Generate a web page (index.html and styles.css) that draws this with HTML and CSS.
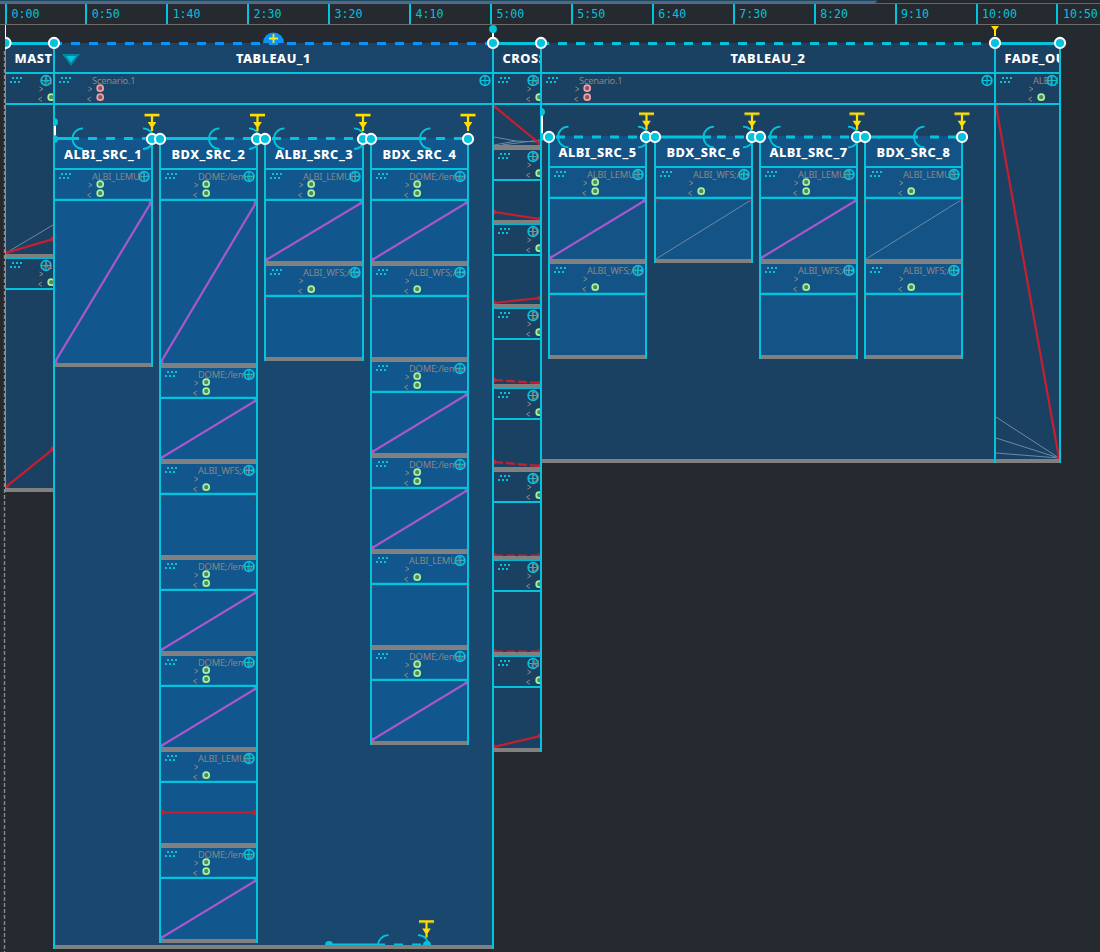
FILE: index.html
```html
<!DOCTYPE html>
<html lang="en">
<head>
<meta charset="utf-8">
<title>Timeline</title>
<link rel="stylesheet" href="styles.css">
</head>
<body>
<div class="app">
  <div class="minimap"><div class="minimap-range"></div></div>
  <div class="ruler" id="ruler"></div>
  <main class="score" id="score"></main>
  <svg class="overlay" id="overlay" width="1100" height="952" viewBox="0 0 1100 952"></svg>
</div>
<script src="app.js"></script>
</body>
</html>
```
FILE: styles.css
```css
* { box-sizing: border-box; }
body {
  margin: 0;
  width: 1100px;
  height: 952px;
  overflow: hidden;
  background: #252930;
  font-family: "Noto Sans", sans-serif;
}
svg { display: block; }
.app { position: relative; height: 952px; overflow: hidden; }
.minimap { height: 4px; border-bottom: 1px solid #666; }
.minimap-range { width: 877px; height: 3px; background: #54668f; border-top: 1px solid #1b4a5a; border-bottom-right-radius: 3px; }
.ruler { display: flex; height: 21px; padding-left: 5px; border-bottom: 1px solid #6c6c6c; overflow: hidden; }
.tick {
  flex: none;
  width: 80.95px;
  height: 20px;
  padding-left: 4.5px;
  border-left: 2px solid #03c3dd;
  color: #03c3dd;
  font: 11.6px/21px "DejaVu Sans Mono", monospace;
}
.tick:first-child { width: 80.2px; }
.score { display: flex; align-items: flex-start; padding: 18px 0 0 5px; }
.interval { flex: none; border: 0 solid #03c3dd; background: #1b4162; overflow: hidden; }
.edge-thin { border-left-width: 1px; }
.edge-left { border-left-width: 2px; }
.edge-right { border-right-width: 2px; }
.title {
  height: 31px;
  border-bottom: 2px solid #03c3dd;
  background: #1b4162;
  color: #fff;
  font-size: 12.8px;
  font-weight: 800;
  letter-spacing: 0.5px;
  line-height: 30px;
  text-align: center;
  white-space: nowrap;
  overflow: hidden;
}
.title.cut { padding-left: 8.5px; text-align: left; }
.tableau { background: #1a476d; }
.tableau .title, .tableau > .slot > .slot-head { background: #1a456a; }
.slot-head { display: grid; grid-template-columns: minmax(0, 1fr); height: 31px; border-bottom: 2px solid #03c3dd; overflow: hidden; }
.slot-head > * { grid-area: 1 / 1; }
.slot-name {
  margin: 0 1px 0 37px;
  color: #8a8782;
  font-size: 9.3px;
  letter-spacing: -0.2px;
  line-height: 13px;
  white-space: nowrap;
  overflow: hidden;
}
.slot-add { justify-self: end; }
.slot + .slot .slot-head { height: 32px; border-top: 1px solid #03b3d3; }
.slot-foot { height: 4px; background: #808080; }
.lane { display: flex; align-items: flex-start; }
.source { flex: none; border: solid #03c3dd; border-width: 0 2px; background: #11568c; overflow: hidden; }
.second .source { background: #145386; }
.source .title { height: 32px; padding-top: 0; line-height: 33px; background: #11568c; }
.source .slot-head { background: #11568c; box-shadow: inset 0 -1px #0b719f; }
.second .title, .second > .slot > .slot-head { background: #1b4162; }
.second .source .title, .second .source .slot-head { background: #145386; }
.overlay { position: absolute; left: 0; top: 0; }
```
FILE: app.js
```js
const CY = '#03c3dd', RED = '#c51f30', VIO = '#a957cc', GRY = '#6b8aa6';

document.getElementById('ruler').innerHTML =
  ['0:00', '0:50', '1:40', '2:30', '3:20', '4:10', '5:00', '5:50', '6:40', '7:30', '8:20', '9:10', '10:00', '10:50']
    .map(t => `<div class="tick">${t}</div>`).join('');

/* Slot header: grip, in/out ports, process name, add button */
function head(name, ports, colors = ['#a5f3a0', '#56855a']) {
  const port = y => `<circle cx="45.2" cy="${y}" r="3" fill="${colors[1]}" stroke="${colors[0]}" stroke-width="1.7"/>`;
  return `<div class="slot-head">
    <svg width="60" height="29"><path fill="${CY}" d="M6 3h2v2h-2zM10 3h2v2h-2zM14 3h2v2h-2zM4 7h2v2h-2zM8 7h2v2h-2zM12 7h2v2h-2z"/>
    <path fill="none" stroke="#8a8782" d="M33.5 13l3.5 2l-3.5 2M36 23l-3.5 2.2l3.5 2.2"/>
    ${ports === 2 ? port(14.2) : ''}${port(23.2)}</svg>
    <svg class="slot-add" width="13" height="13"><circle cx="6" cy="6.5" r="4.8" fill="none" stroke="${CY}" stroke-width="1.8"/><path d="M6 2v9M1.5 6.5h9" stroke="${CY}" stroke-width="1.2"/></svg>
    <div class="slot-name">${name}</div>
  </div>`;
}

const ln = (x1, y1, x2, y2, c, w, extra = '') =>
  `<line x1="${x1}" y1="${y1}" x2="${x2}" y2="${y2}" stroke="${c}" stroke-width="${w}" ${extra}/>`;
const dot = (x, y, c, r = 2.5) => `<circle cx="${x}" cy="${y}" r="${r}" fill="${c}"/>`;

const curves = {
  violet: (w, h) => ln(0, h - 1, w, 1.5, VIO, 2.2) + dot(0.5, h - 1.5, VIO, 2) + dot(w - 0.5, 1.5, VIO, 2),
  top: w => ln(0, .5, w, .5, RED, 1) + `<path fill="${RED}" d="M0 0h3L0 3zM${w} 0h-3l3 3z"/>`,
  topDiag: (w, h) => ln(0, h, w, 1, GRY, 1) + curves.top(w),
  mid: w => ln(0, 29.5, w, 29.5, RED, 2.2) + dot(0, 29.5, RED, 3) + dot(w, 29.5, RED, 3)
};
const seg = (a, b, dash, extra = '') => w =>
  extra + ln(0, a, w, b, RED, 2.2, dash ? 'stroke-dasharray="9 3"' : '') + dot(0, a, RED) + dot(w, b, RED);

function slot([name, ports, h, draw, colors], w) {
  const f = typeof draw === 'string' ? curves[draw] : draw;
  return `<section class="slot">${head(name, ports, colors)}
    <svg width="${w}" height="${h}">${f(w, h)}</svg><div class="slot-foot"></div></section>`;
}

const L2 = ['ALBI_LEMUR;', 2, 60, 'violet'], D = ['DOME;/lemur', 2, 60, 'violet'];
const W = ['ALBI_WFS;/lfs', 1, 60, 'top'], L1 = ['ALBI_LEMUR;', 1, 60, 'top'];
const vary = (s, h, d) => [s[0], s[1], h, d];

/* [title, gap before, width, slots] */
const first = [
  ['ALBI_SRC_1', -2, 100, [vary(L2, 162, 'violet')]],
  ['BDX_SRC_2', 6, 99, [vary(D, 162, 'violet'), D, W, D, D, vary(L1, 60, 'mid'), D]],
  ['ALBI_SRC_3', 6, 100, [L2, W]],
  ['BDX_SRC_4', 6, 99, [D, W, D, D, L1, D]]
];
const second = [
  ['ALBI_SRC_5', 6, 99, [L2, W]],
  ['BDX_SRC_6', 7, 99, [vary(W, 60, 'topDiag')]],
  ['ALBI_SRC_7', 6, 99, [L2, W]],
  ['BDX_SRC_8', 6, 99, [vary(L1, 60, 'topDiag'), W]]
];

function tableau(list, cls, edge, title, w, h, top) {
  const cols = list.map(([t, gap, cw, slots]) => `<div class="source" style="margin-left:${gap}px;width:${cw}px">
    <div class="title">${t}</div>${slots.map(s => slot(s, cw - 4)).join('')}</div>`).join('');
  return `<section class="interval ${cls} ${edge}" style="width:${w}px"><div class="title">${title}</div>
    <div class="slot">${head('Scenario.1', 2, ['#f2a0a8', '#8d5560'])}
    <div class="lane" style="height:${h}px;padding-top:${top}px">${cols}</div><div class="slot-foot"></div></div></section>`;
}
const plain = (title, edge, w, inner, slots) =>
  `<section class="interval ${edge}" style="width:${w}px"><div class="title cut">${title}</div>
   ${slots.map(s => slot(s, inner)).join('')}</section>`;

const AL = 'ALBI_LEMUR', DM = 'DOME;/lemur';
document.getElementById('score').innerHTML =
  plain('MASTER', 'edge-thin', 48, 47, [
    [AL, 1, 149, seg(148, 134, 0, ln(0, 148, 47, 120, GRY, 1))],
    [AL, 1, 198, seg(197, 159)]]) +
  tableau(first, 'tableau', 'edge-left edge-right', 'TABLEAU_1', 441, 840, 33) +
  plain('CROSSFADE', 'edge-right', 48, 46, [
    [AL, 1, 40, seg(1, 39, 0, `<path d="M0 32L22 36L46 37M0 40L22 36M8 40L46 35" fill="none" stroke="${GRY}"/>`)],
    [DM, 1, 39, seg(31, 38)], [DM, 1, 48, seg(47, 42)], [DM, 1, 44, seg(40, 43, 1)],
    [DM, 1, 47, seg(42, 46, 1)], [DM, 1, 53, seg(52.5, 52.5, 1)],
    [DM, 1, 60, seg(59.5, 59.5, 1)], [AL, 1, 60, seg(59, 48)]]) +
  tableau(second, 'second', '', 'TABLEAU_2', 452, 354, 31) +
  plain('FADE_OUT', 'edge-left edge-right', 67, 63, [
    ['ALBI_L', 1, 354, seg(1, 353, 0, [312, 333, 348].map(y => ln(0, y, 63, 353, GRY, 1)).join(''))]]);

/* Overlay: time bars, flexible bounds, sync nodes and triggers */
const bar = (x1, x2, y, c = CY, h = 3) => ln(x1, y, x2, y, c, h);
const dashes = (x1, x2, y, c = CY) => ln(x1, y, x2, y, c, 3, 'stroke-dasharray="9 9"');
const open = (x, y) => `<path d="M${x + 11} ${y - 10.3}A10.5 10.3 0 0 0 ${x + 11} ${y + 10.3}" fill="none" stroke="${CY}" stroke-width="1.8"/>`;
const close = (x, y) => `<path d="M${x} ${y - 10.3}A10.5 10.3 0 0 1 ${x} ${y + 10.3}" fill="none" stroke="${CY}" stroke-width="1.8"/>`;
const node = (x, y) => `<circle cx="${x}" cy="${y}" r="5.1" fill="${CY}" stroke="#fff" stroke-width="2.1"/>`;
const trig = (x, y) => `<path fill="#a08f18" d="M${x - 7.5} ${y + 2}h15v.8h-15z"/><path fill="#ffde00" d="M${x - 7.5} ${y - .3}h15v2.3h-6.4v6h3.2l-3.2 5v4h-2.2v-4l-3.2-5h3.2v-6h-6.4z"/>`;

let o = '';
o += ln(4.5, 45, 4.5, 952, '#8a8a8a', 1.4, 'stroke-dasharray="4 2"');
o += ln(5.5, 25, 5.5, 42, '#fff', 1) + bar(5, 54, 43.5) + dashes(53, 487, 43.5, '#0894ff') + bar(493, 541, 43.5) + dashes(540, 990, 43.5) + bar(995, 1060, 43.5);
o += `<path d="M263 43a10.5 10.5 0 0 1 21 0z" fill="#0894ff"/><path d="M273.5 34v9M269 38.5h9" stroke="#ffe600" stroke-width="1.8"/>`;
o += ln(493, 29, 493, 40, '#fff', 2) + dot(493, 29, CY, 3.9);
o += `<path fill="#ffde00" d="M991 26h8l-3 4v6h-2v-6z"/>`;
o += `<path d="M64 55h14l-7 9z" fill="${CY}" stroke="#07859c" stroke-width="2"/>`;

o += ln(55, 125, 55, 136, '#fff', 2) + '<path fill="#03c3dd" d="M54 118a4 4 0 0 1 0 8zM54 135a4 4 0 0 1 0 8z"/>';
o += ln(542, 115, 542, 134, '#fff', 2) + '<path fill="#03c3dd" d="M541 108a4 4 0 0 1 0 8zM541 133a4 4 0 0 1 0 8z"/>' + bar(541, 549, 137);

[[54, 79, 88, 150, 72, 143], [160, 217, 225, 255, 208.5, 249], [264, 264, 272, 360, 273.5, 354], [371, 426, 436, 466, 419.5, 0]]
  .forEach(([a, b, c, d, l, r]) => { o += bar(a, b, 138.5) + dashes(c, d, 138.5) + open(l, 138.7) + (r ? close(r, 138.7) : ''); });
[[549, 549, 556, 643, 557.5, 638], [655, 711, 717, 750, 703, 743], [760, 760, 768, 855, 769.5, 848], [865, 918, 930, 960, 913.5, 0]]
  .forEach(([a, b, c, d, l, r]) => { o += bar(a, b, 137) + dashes(c, d, 137) + open(l, 137) + (r ? close(r, 137) : ''); });
[152, 257.5, 363, 468].forEach(x => { o += trig(x, 114); });
[646.5, 752, 857, 962].forEach(x => { o += trig(x, 112.7); });
[5.5, 54, 493, 541, 995, 1060].forEach(x => { o += node(x, 43); });
[152, 160, 257, 265, 363, 371, 468].forEach(x => { o += node(x, 139); });
[549, 646, 655, 752, 760, 857, 865, 962].forEach(x => { o += node(x, 137); });

o += `<clipPath id="lower"><path d="M300 900h150v45h-150z"/></clipPath><g clip-path="url(#lower)">` +
  bar(329, 385, 945) + dashes(394, 424, 945) + open(377.5, 945.5) + close(418, 945.5) + dot(329, 945, CY, 4) + trig(426.5, 920.5) + dot(427, 945, CY, 4) + '</g>';
o += '<path fill="#252930" d="M0 30h5v20h-5z"/>';
document.getElementById('overlay').innerHTML = o;
```
